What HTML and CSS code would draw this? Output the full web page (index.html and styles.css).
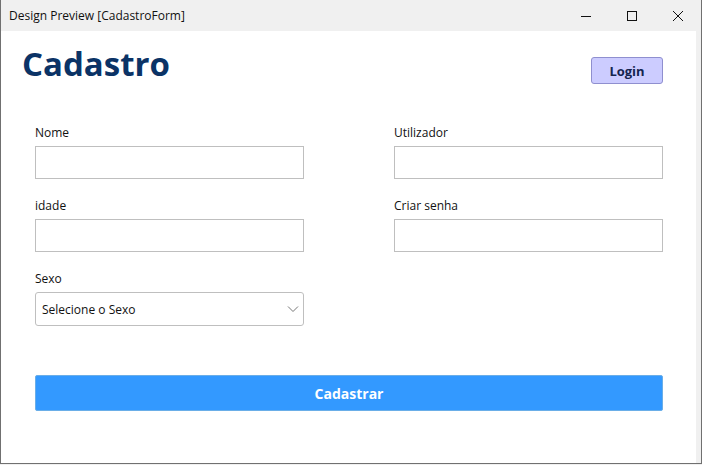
FILE: index.html
```html
<!DOCTYPE html>
<html lang="pt">
<head>
<meta charset="utf-8">
<title>CadastroForm</title>
<link rel="stylesheet" href="styles.css">
</head>
<body>
<div class="window">
  <div class="titlebar">
    <span class="title">Design Preview [CadastroForm]</span>
    <div class="controls">
      <span class="ctl"><svg width="12" height="12" viewBox="0 0 12 12"><path d="M1 6.5h10" stroke="#111" stroke-width="1"/></svg></span>
      <span class="ctl"><svg width="12" height="12" viewBox="0 0 12 12"><rect x="1.5" y="1.5" width="9" height="9" fill="none" stroke="#111" stroke-width="1"/></svg></span>
      <span class="ctl"><svg width="12" height="12" viewBox="0 0 12 12"><path d="M1 1L11 11M11 1L1 11" stroke="#111" stroke-width="1"/></svg></span>
    </div>
  </div>
  <div class="body">
    <div class="content">
      <div class="header">
        <h1 class="heading">Cadastro</h1>
        <button class="login">Login</button>
      </div>
      <div class="form">
        <div class="col">
          <div class="field">
            <label class="lbl">Nome</label>
            <div class="input"></div>
          </div>
          <div class="field">
            <label class="lbl">idade</label>
            <div class="input"></div>
          </div>
          <div class="field">
            <label class="lbl">Sexo</label>
            <div class="select">
              <span>Selecione o Sexo</span>
              <svg width="12" height="8" viewBox="0 0 12 8"><path d="M1 1.5L6 6.5L11 1.5" fill="none" stroke="#777" stroke-width="1"/></svg>
            </div>
          </div>
        </div>
        <div class="col">
          <div class="field">
            <label class="lbl">Utilizador</label>
            <div class="input"></div>
          </div>
          <div class="field">
            <label class="lbl">Criar senha</label>
            <div class="input"></div>
          </div>
        </div>
      </div>
      <button class="submit">Cadastrar</button>
    </div>
    <div class="strip"></div>
  </div>
</div>
</body>
</html>
```

FILE: styles.css
```css
* { box-sizing: border-box; }
html, body { margin: 0; padding: 0; background: #f0f0f0; }
body { font-family: "Open Sans", "Noto Sans", sans-serif; }
.window {
  width: 702px;
  height: 464px;
  border: 1px solid #707070;
  border-top: none;
  display: flex;
  flex-direction: column;
  background: #f0f0f0;
}
.titlebar {
  height: 31px;
  display: flex;
  align-items: center;
  justify-content: space-between;
  background: #f0f0f0;
  padding-left: 8px;
}
.title { font-size: 12px; color: #111; }
.controls { display: flex; height: 100%; }
.ctl { width: 46px; display: flex; align-items: center; justify-content: center; }
.body { flex: 1; display: flex; }
.content {
  flex: 1;
  background: #fff;
  padding: 12px 0 0 21px;
  display: flex;
  flex-direction: column;
}
.strip { width: 5px; background: #f0f0f0; }
.header {
  display: flex;
  justify-content: space-between;
  align-items: flex-start;
  padding-right: 33px;
}
.heading {
  margin: 0;
  font-weight: 700;
  font-size: 33px;
  line-height: 42px;
  color: #0b3366;
  letter-spacing: 0;
}
.login {
  margin-top: 14px;
  width: 72px;
  height: 27px;
  background: #ccccff;
  border: 1px solid #8f8fcf;
  border-radius: 3px;
  font-family: inherit;
  font-weight: 700;
  font-size: 13px;
  color: #14244f;
  padding: 0;
}
.form {
  display: flex;
  gap: 90px;
  padding-left: 13px;
  margin-top: 39px;
}
.col { display: flex; flex-direction: column; gap: 18px; width: 269px; }
.field { display: flex; flex-direction: column; }
.lbl { font-size: 12px; line-height: 17px; color: #111; margin-bottom: 5px; }
.input {
  height: 33px;
  border: 1px solid #bfbfbf;
  background: #fff;
}
.select {
  height: 34px;
  border: 1px solid #bfbfbf;
  border-radius: 3px;
  display: flex;
  align-items: center;
  justify-content: space-between;
  padding: 0 4px 0 6px;
  font-size: 12px;
  color: #111;
}
.submit {
  margin: 49px 33px 0 13px;
  height: 36px;
  background: #3399ff;
  border: 1px solid #6aaee8;
  border-radius: 2px;
  color: #fff;
  font-family: inherit;
  font-weight: 700;
  font-size: 14px;
  padding: 0;
}
```
